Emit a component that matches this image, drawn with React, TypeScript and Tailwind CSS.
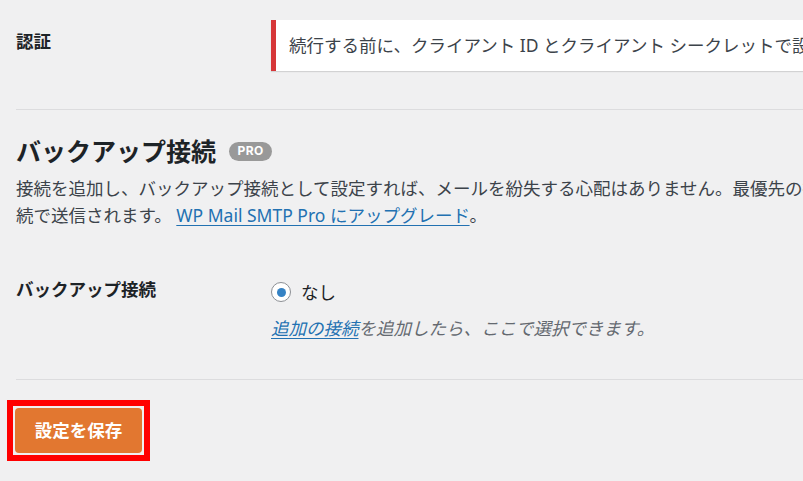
import { type ReactNode } from 'react';

const jp = { fontFamily: '"Noto Sans", "Noto Sans CJK JP", sans-serif' };

function Label({ children }: { children: ReactNode }) {
  return (
    <div className="w-[255px] shrink-0 text-[17.5px] leading-[26px] font-bold text-[#1d2327]">
      {children}
    </div>
  );
}

export default function App() {
  return (
    <div style={jp} className="h-[481px] w-full overflow-hidden bg-[#f0f0f1]">
      <div className="w-[1200px] pl-[16px]">
        {/* Auth row */}
        <div className="flex border-b border-[#dcdcde] pt-[20px] pb-[38px]">
          <div className="pt-[8px]">
            <Label>認証</Label>
          </div>
          <div className="flex h-[51px] flex-1 items-center border-l-[5px] border-[#d63638] bg-white pl-[13px] shadow-[0_1px_1px_rgba(0,0,0,0.12)]">
            <p className="whitespace-nowrap text-[17.5px] text-[#3c434a]">
              続行する前に、クライアント ID とクライアント シークレットで設定を保存し、Google で認証してください。
            </p>
          </div>
        </div>

        {/* Backup connection section */}
        <div className="mt-[25px] flex items-center">
          <h2 className="text-[25px] leading-[32px] font-bold text-[#1d2327]">バックアップ接続</h2>
          <span
            style={{ fontFamily: 'Inter, sans-serif' }}
            className="ml-[13px] inline-flex h-[19px] w-[43px] items-center justify-center rounded-full bg-[#999999] text-[12px] font-bold tracking-[0.4px] text-white"
          >
            PRO
          </span>
        </div>
        <p className="mt-[8px] text-[17.5px] leading-[26.5px] text-[#3c434a]">
          <span className="block whitespace-nowrap">
            接続を追加し、バックアップ接続として設定すれば、メールを紛失する心配はありません。最優先の接続が失敗した場合、メールはバックアップ接
          </span>
          <span className="block whitespace-nowrap">
            続で送信されます。{' '}
            <a href="#" className="text-[#2271b1] underline underline-offset-[3px]">
              WP Mail SMTP Pro にアップグレード
            </a>
            。
          </span>
        </p>

        {/* Backup connection row */}
        <div className="mt-[48px] flex border-b border-[#dcdcde] pb-[38px]">
          <Label>バックアップ接続</Label>
          <div className="pt-[3px]">
            <label className="flex items-center gap-[10px] text-[17.5px] leading-[26px] text-[#1d2327]">
              <span className="flex h-[20px] w-[20px] items-center justify-center rounded-full border border-[#8c8f94] bg-white">
                <span className="h-[9px] w-[9px] rounded-full bg-[#3582c4]" />
              </span>
              なし
            </label>
            <p className="mt-[10px] text-[17.5px] leading-[26px] italic text-[#646970]">
              <a href="#" className="text-[#2271b1] underline underline-offset-[3px]">
                追加の接続
              </a>
              を追加したら、ここで選択できます。
            </p>
          </div>
        </div>

        {/* Save */}
        <div className="mt-[20px] ml-[-9px] inline-block border-[6px] border-[#ff0000] p-[2px]">
          <button className="flex h-[45px] w-[127px] items-center justify-center rounded-[4px] bg-[#e27730] text-[17.5px] font-bold text-white">
            設定を保存
          </button>
        </div>
      </div>
    </div>
  );
}
